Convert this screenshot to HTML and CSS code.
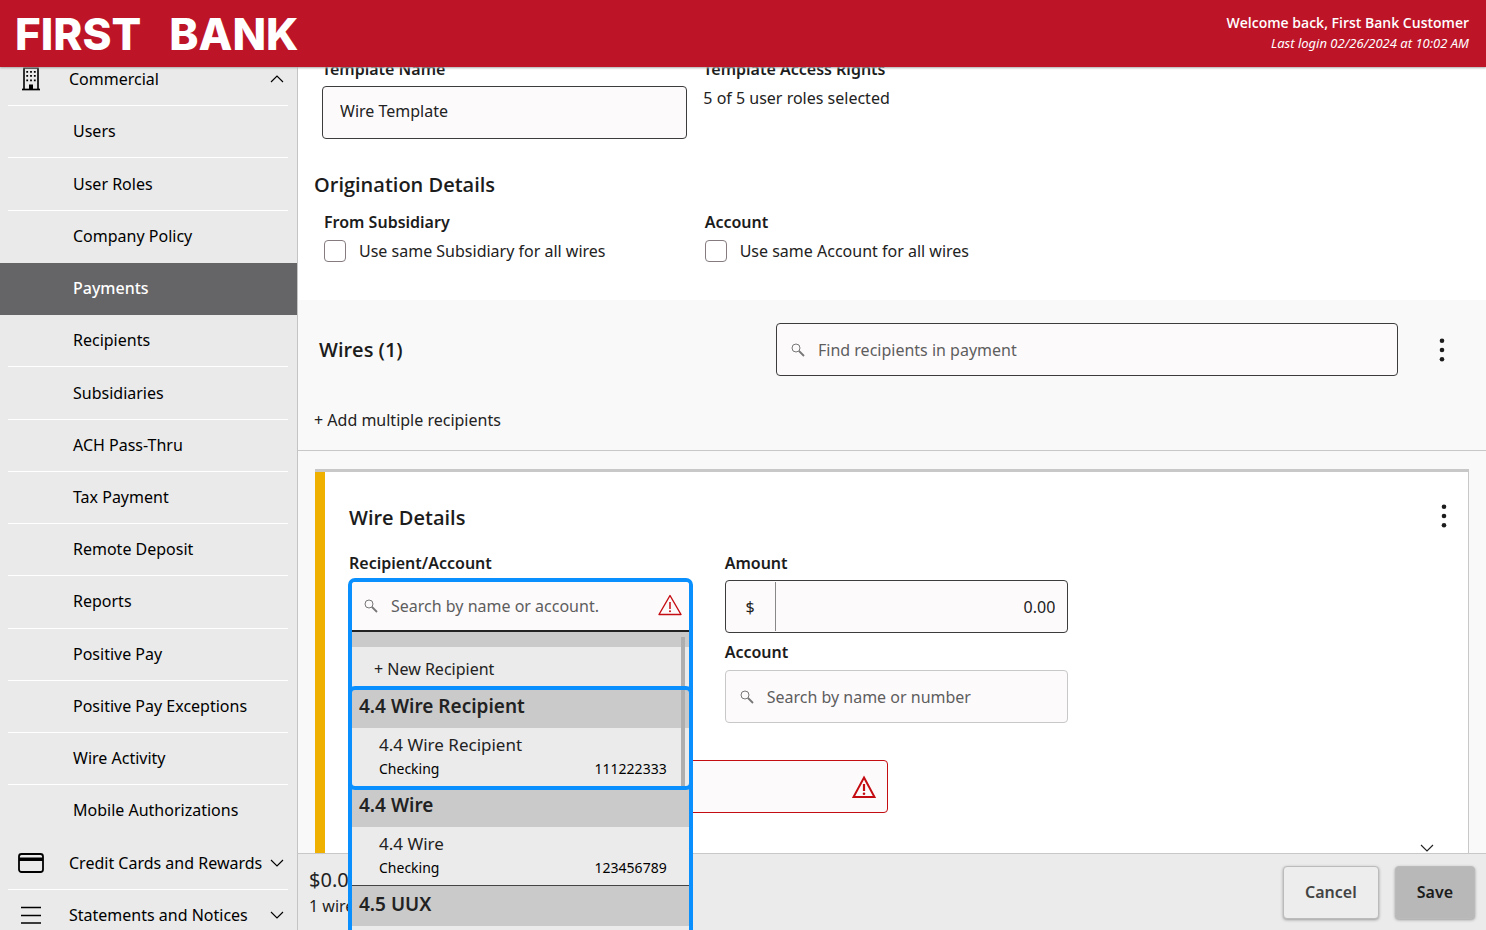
FILE: index.html
```html
<!DOCTYPE html>
<html lang="en">
<head>
<meta charset="utf-8">
<meta name="viewport" content="width=device-width, initial-scale=1">
<title>First Bank - Wire Template</title>
<link rel="stylesheet" href="styles.css">
</head>
<body>
<svg class="sprite" aria-hidden="true">
  <symbol id="search" viewBox="0 0 14 14"><circle cx="5" cy="5" r="4" fill="none" stroke="currentColor" stroke-width="1"/><path d="M8 8l5 5" fill="none" stroke="currentColor" stroke-width="1.800"/></symbol>
  <symbol id="down" viewBox="0 0 14 8"><path d="M1 1l6 6 6-6" fill="none" stroke="currentColor" stroke-width="1.150"/></symbol>
  <symbol id="up" viewBox="0 0 14 8"><path d="M1 7l6-6 6 6" fill="none" stroke="currentColor" stroke-width="1.150"/></symbol>
  <symbol id="dots" viewBox="0 0 6 24"><circle cx="3" cy="2.700" r="2.300"/><circle cx="3" cy="12" r="2.300"/><circle cx="3" cy="21.300" r="2.300"/></symbol>
</svg>
<header class="topbar">
  <div class="logo"><span>FIRST</span> <span>BANK</span></div>
  <div class="welcome">
    <strong>Welcome back, First Bank Customer</strong>
    <em>Last login 02/26/2024 at 10:02 AM</em>
  </div>
</header>
<div class="shell">
  <nav class="sidebar" aria-label="Main">
    <ul class="menu">
      <li><button class="group" type="button" aria-expanded="true">
        <svg class="nav-icon" viewBox="0 0 26 26"><path d="M6 23V2h14v21" fill="none" stroke="currentColor" stroke-width="1.600"/><path d="M4 23.500h18" stroke="currentColor" stroke-width="1.700"/><path d="M11 18.500h4v5h-4z"/><path d="M8.300 5h1.800v1.800h-1.800zm3.800 0h1.800v1.800h-1.800zm3.800 0h1.800v1.800h-1.800zm-7.600 4h1.800v1.800h-1.800zm3.800 0h1.800v1.800h-1.800zm3.800 0h1.800v1.800h-1.800zm-7.600 4.500h1.800v1.800h-1.800zm3.800 0h1.800v1.800h-1.800zm3.800 0h1.800v1.800h-1.800z"/></svg>
        <span>Commercial</span><svg class="chevron"><use href="#up"/></svg></button></li>
      <li><a href="#">Users</a></li>
      <li><a href="#">User Roles</a></li>
      <li class="bare"><a href="#">Company Policy</a></li>
      <li class="current"><a href="#" aria-current="page">Payments</a></li>
      <li><a href="#">Recipients</a></li>
      <li><a href="#">Subsidiaries</a></li>
      <li><a href="#">ACH Pass-Thru</a></li>
      <li><a href="#">Tax Payment</a></li>
      <li><a href="#">Remote Deposit</a></li>
      <li><a href="#">Reports</a></li>
      <li><a href="#">Positive Pay</a></li>
      <li><a href="#">Positive Pay Exceptions</a></li>
      <li><a href="#">Wire Activity</a></li>
      <li class="bare"><a href="#">Mobile Authorizations</a></li>
      <li><button class="group" type="button" aria-expanded="false">
        <svg class="nav-icon" viewBox="0 0 26 26"><rect x="1" y="4" width="24" height="18" rx="2.500" fill="none" stroke="currentColor" stroke-width="1.800"/><path d="M1 7.500h24v3.500H1z"/></svg>
        <span>Credit Cards and Rewards</span><svg class="chevron"><use href="#down"/></svg></button></li>
      <li class="bare"><button class="group" type="button" aria-expanded="false">
        <svg class="nav-icon" viewBox="0 0 26 26"><path d="M3 5.500h20M3 13.500h20M3 21h20" stroke="currentColor" stroke-width="1.700"/></svg>
        <span>Statements and Notices</span><svg class="chevron"><use href="#down"/></svg></button></li>
    </ul>
  </nav>
  <main class="main">
    <section class="template">
      <div class="fields">
        <div>
          <label class="label" for="template-name">Template Name</label>
          <input class="box" id="template-name" type="text" value="Wire Template">
        </div>
        <div>
          <div class="label">Template Access Rights</div>
          <div class="roles">5 of 5 user roles selected</div>
        </div>
      </div>
      <h2>Origination Details</h2>
      <div class="fields inset">
        <div>
          <div class="label">From Subsidiary</div>
          <label class="check"><input type="checkbox">Use same Subsidiary for all wires</label>
        </div>
        <div>
          <div class="label">Account</div>
          <label class="check"><input type="checkbox">Use same Account for all wires</label>
        </div>
      </div>
    </section>
    <section class="wires">
      <div class="wires-row">
        <h2>Wires (1)</h2>
        <div class="box search-box">
          <svg class="search-icon"><use href="#search"/></svg>
          <input type="text" aria-label="Find recipients in payment" placeholder="Find recipients in payment">
        </div>
        <button class="more" type="button" aria-label="Wires options"><svg><use href="#dots"/></svg></button>
      </div>
      <button class="add" type="button">+ Add multiple recipients</button>
    </section>
    <section class="wire-area">
      <div class="card">
        <div class="card-head">
          <h2>Wire Details</h2>
          <button class="more" type="button" aria-label="Wire options"><svg><use href="#dots"/></svg></button>
        </div>
        <div class="card-grid">
          <div>
            <label class="label" for="recipient">Recipient/Account</label>
            <div class="combo">
              <div class="combo-panel">
                <div class="combo-input">
                  <svg class="search-icon"><use href="#search"/></svg>
                  <input id="recipient" type="text" placeholder="Search by name or account.">
                  <svg class="alert" viewBox="0 0 24 24"><path d="M12 1.500L23 20.500H1z" fill="none" stroke="currentColor" stroke-width="1.400" stroke-linejoin="round"/><path d="M12 8v7" stroke="currentColor" stroke-width="1.500"/><circle cx="12" cy="17.200" r="1"/></svg>
                </div>
                <div class="list">
                  <div class="spacer"></div>
                  <button class="new" type="button">+ New Recipient</button>
                  <div class="option-group picked">
                    <div class="group-name">4.4 Wire Recipient</div>
                    <button class="option" type="button"><span>4.4 Wire Recipient</span><small><span>Checking</span><span>111222333</span></small></button>
                  </div>
                  <div class="option-group">
                    <div class="group-name">4.4 Wire</div>
                    <button class="option" type="button"><span>4.4 Wire</span><small><span>Checking</span><span>123456789</span></small></button>
                  </div>
                  <div class="option-group last">
                    <div class="group-name">4.5 UUX</div>
                  </div>
                  <div class="scrollbar"></div>
                </div>
              </div>
            </div>
          </div>
          <div>
            <label class="label" for="amount">Amount</label>
            <div class="box amount"><span>$</span><input id="amount" type="text" value="0.00"></div>
            <label class="label account-label" for="account">Account</label>
            <div class="box search-box quiet">
              <svg class="search-icon"><use href="#search"/></svg>
              <input id="account" type="text" placeholder="Search by name or number">
            </div>
          </div>
        </div>
        <div class="purpose">
          <div class="box error">
            <input type="text" aria-label="Purpose">
            <svg class="alert" viewBox="0 0 24 24"><path d="M12 2.500L22.500 22h-21z" fill="none" stroke="currentColor" stroke-width="2"/><path d="M12 9v7" stroke="currentColor" stroke-width="2.200"/><circle cx="12" cy="18.700" r="1.300"/></svg>
          </div>
        </div>
        <button class="expand" type="button" aria-label="Show more"><svg class="chevron"><use href="#down"/></svg></button>
      </div>
    </section>
    <footer class="footer">
      <div class="totals"><div class="sum">$0.00</div><div>1 wire</div></div>
      <button class="action" type="button">Cancel</button>
      <button class="action save" type="button">Save</button>
    </footer>
  </main>
</div>
</body>
</html>
```
FILE: styles.css
```css
* { box-sizing: border-box; }
body {
  margin: 0;
  height: 100vh;
  overflow: hidden;
  display: flex;
  flex-direction: column;
  font: 16px/24px "Noto Sans", "Open Sans", sans-serif;
  color: #222;
  background: #fff;
}
button, input { font: inherit; color: inherit; margin: 0; padding: 0; border: 0; background: none; }
button { cursor: pointer; }
input { min-width: 0; outline: 0; }
input::placeholder { color: #5e5e5e; opacity: 1; }
h2 { margin: 0; font: 600 20px/28px "Open Sans", "Noto Sans", sans-serif; color: #1c1c1c; }
svg { fill: currentColor; flex: none; }
.sprite { display: none; }

.topbar {
  flex: none;
  height: 67px;
  padding: 0 17px 2px 15px;
  display: flex;
  align-items: center;
  justify-content: space-between;
  background: #be1428;
  color: #fff;
  box-shadow: 0 1px 2px #aaa;
  position: relative;
  z-index: 5;
}
.logo { display: flex; gap: 28px; padding-top: 2px; font: 800 44px/48px Inter, sans-serif; }
.welcome { display: flex; flex-direction: column; text-align: right; font: 14px/20px "Open Sans", "Noto Sans", sans-serif; }
.welcome strong { font-weight: 600; }
.welcome em { font-family: "Noto Sans", sans-serif; font-size: 13px; }

.shell { flex: 1; min-height: 0; display: grid; grid-template-columns: 298px 1fr; }
.sidebar { min-height: 0; display: grid; background: #eaeaea; border-right: 1px solid #c4c4c4; color: #000; }
.menu {
  list-style: none;
  margin: -13px 0 -12px;
  padding: 0;
  display: grid;
  grid-auto-rows: minmax(52px, 1fr);
}
.menu li { margin: 0 9px 0 8px; border-bottom: 1px solid #fff; display: grid; }
.menu li.bare { border-color: transparent; }
.menu li.current { margin: 0; padding-left: 8px; background: #656466; border-color: #656466; color: #fff; font-weight: 500; }
.menu a { display: flex; align-items: center; padding: 0 0 1px 65px; color: inherit; text-decoration: none; }
.group { display: flex; align-items: center; padding: 0 4px 1px 10px; text-align: left; }
.group span { flex: 1; margin-left: 25px; white-space: nowrap; }
.nav-icon { width: 26px; height: 26px; }
.chevron { width: 14px; height: 8px; }

.main { min-width: 0; min-height: 0; display: flex; flex-direction: column; background: #f9f9f9; }
.template { background: #fff; padding: 0 36px 37px 16px; margin-top: -10px; }
.label { display: block; font-weight: 600; color: #1c1c1c; }
.fields { display: grid; grid-template-columns: repeat(3, 1fr); gap: 16px; padding-left: 8px; }
.fields.inset { padding-left: 10px; }
.box { width: 100%; height: 53px; border: 1px solid #3c3c3c; border-radius: 4px; background: #fdfafc; }
#template-name { display: block; margin-top: 5px; padding: 0 17px 3px; }
.roles { margin-top: 5px; }
.template h2 { margin: 32px 0 11px; }
.check { display: flex; align-items: center; gap: 13px; margin-top: 5px; }
.check input { appearance: none; width: 22px; height: 22px; border: 1px solid #857b80; border-radius: 4px; background: #fff; }

.wires { padding: 23px 16px 18px; border-bottom: 1px solid #c8c8c8; }
.wires-row { display: grid; grid-template-columns: 425fr 622fr 24px; gap: 32px; align-items: center; padding: 0 16px 0 5px; }
.search-box { display: flex; align-items: center; gap: 13px; padding: 0 14px; }
.search-box input { flex: 1; }
.search-icon { width: 14px; height: 14px; color: #777; }
.more { width: 24px; height: 24px; display: grid; place-items: center; color: #1c1c1c; }
.more svg { width: 6px; height: 24px; }
.add { display: block; margin-top: 32px; }

.wire-area { flex: 1; min-height: 0; padding: 18px 17px 0; display: grid; }
.card {
  min-height: 0;
  display: flex;
  flex-direction: column;
  padding: 32px 24px 0 34px;
  background: #fff;
  border-top: 3px solid #c8c8c8;
  border-right: 1px solid #c8c8c8;
  box-shadow: inset 10px 0 #efb000;
}
.card-head { display: flex; justify-content: space-between; align-items: start; margin-right: -12px; }
.card-grid { display: grid; grid-template-columns: repeat(3, 1fr); gap: 32px; margin-top: 19px; }
.combo { position: relative; z-index: 4; margin-top: 3px; }
.combo-panel { position: absolute; left: -1px; right: 0; top: 0; border: 4px solid #0a8fff; border-radius: 7px; background: #ebebeb; }
.combo-input { display: flex; align-items: center; gap: 13px; height: 50px; padding: 0 7px 0 12px; border-bottom: 2px solid #222; border-radius: 3px 3px 0 0; background: #fdfafc; }
.combo-input input { flex: 1; }
.alert { width: 24px; height: 24px; color: #c40d12; }
.list { position: relative; }
.spacer { height: 15px; background: #cacaca; }
.new { display: block; width: 100%; height: 41px; padding: 3px 22px 0; text-align: left; }
.option-group { position: relative; border-bottom: 1px solid #444; }
.group-name { height: 40px; padding: 4px 7px; background: #cacaca; font-size: 19px; line-height: 28px; font-weight: 600; }
.option { display: flex; flex-direction: column; width: 100%; height: 58px; padding: 5px 22px 0 27px; text-align: left; font-size: 17px; }
.option small { width: 100%; display: flex; justify-content: space-between; font-size: 14px; color: #000; }
.picked::after { content: ""; position: absolute; z-index: 2; inset: -2px -4px -4px; border: 4px solid #0a8fff; border-radius: 7px; pointer-events: none; }
.last { padding-bottom: 40px; }
.scrollbar { position: absolute; z-index: 1; top: 5px; right: 4px; width: 4px; height: 150px; background: #aeaeae; }

.amount { display: flex; align-items: center; margin-top: 5px; }
.amount span { width: 50px; height: 49px; display: grid; place-items: center; border-right: 1px solid #888; }
.amount input { flex: 1; text-align: right; padding-right: 12px; }
.account-label { margin-top: 7px; }
.quiet { border-color: #c8c8c8; margin-top: 6px; }
.purpose { display: grid; grid-template-columns: 1fr 1fr; gap: 18px; margin-top: 37px; }
.error { display: flex; align-items: center; padding: 0 11px; border-color: #c40d12; }
.error input { flex: 1; }
.expand { margin: auto 1px 0 auto; width: 32px; height: 10px; display: grid; place-items: center; }

.footer { flex: none; height: 77px; display: flex; align-items: center; gap: 16px; padding: 0 11px; background: #ebebeb; border-top: 1px solid #c8c8c8; }
.totals { flex: 1; line-height: 24px; }
.sum { font-size: 20px; line-height: 28px; }
.action { height: 53px; padding: 0 21px; border: 1px solid #bbb; border-radius: 4px; font-weight: 600; color: #444; box-shadow: 0 1px 3px #999; background: #ededed; }
.save { background: #b8b8b8; color: #1c1c1c; }
```
